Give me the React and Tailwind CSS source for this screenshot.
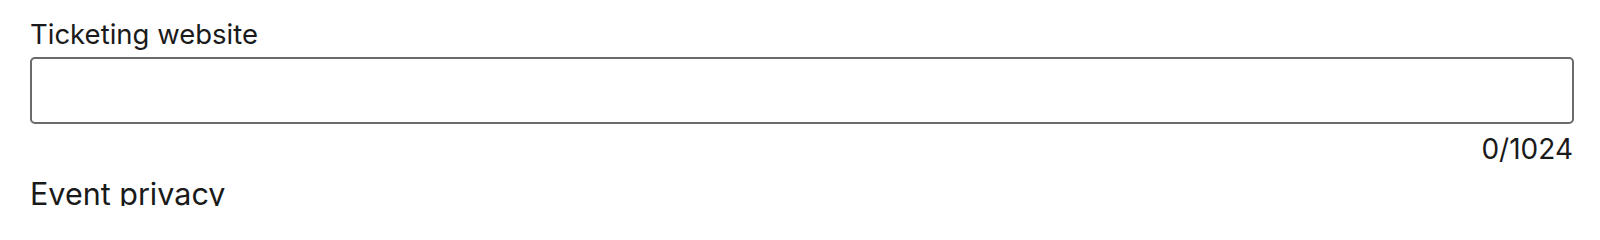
export default function App() {
  return (
    <div className="bg-white w-[1600px] h-[206px] overflow-hidden pl-[30px] pr-[26px] pt-[16px] font-['Inter',sans-serif] text-[#1a1a1a]">
      <label htmlFor="ticketing" className="block text-[27.5px] leading-[36px]">
        Ticketing website
      </label>
      <input
        id="ticketing"
        type="text"
        className="block mt-[5px] w-full h-[67px] border-2 border-[#6a6a6a] rounded-[5px] bg-white px-3 outline-none"
      />
      <div className="mt-[7px] text-right text-[28px] leading-[36px] pr-[1px]">0/1024</div>
      <h2 className="mt-[8px] text-[30.5px] leading-[38px]">Event privacy</h2>
    </div>
  )
}
